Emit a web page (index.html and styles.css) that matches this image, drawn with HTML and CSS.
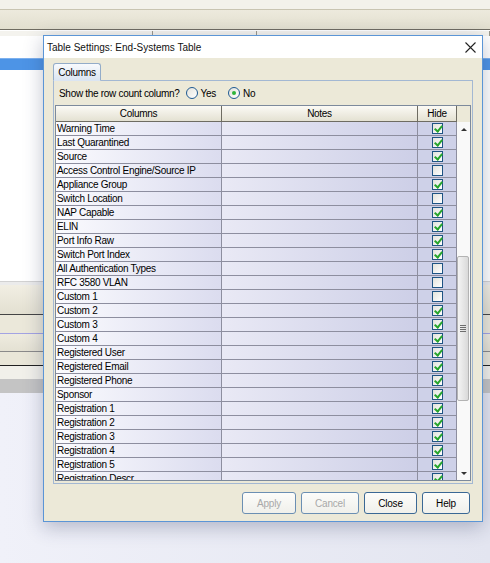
FILE: index.html
```html
<!DOCTYPE html>
<html lang="en">
<head>
  <meta charset="UTF-8" />
  <title>Table Settings: End-Systems Table</title>
  <link rel="stylesheet" href="styles.css">
</head>
<body>
  <!-- Application window behind the dialog -->
  <div class="app">
    <div class="app-top"></div>
    <div class="app-toolbar"></div>
    <div class="app-head">
      <span class="head-cell w1"></span>
      <span class="head-cell w2"></span>
      <span class="head-cell"></span>
    </div>
    <div class="app-grid">
      <div class="sel-row"></div>
    </div>
    <div class="band band-a"></div>
    <div class="band band-b"></div>
    <div class="band band-c"></div>
    <div class="band band-d"></div>
    <div class="band band-e"></div>
    <div class="band band-f"></div>
    <div class="band band-g"></div>
    <div class="desk"></div>
  </div>

  <!-- Table Settings dialog -->
  <div class="dialog">
    <div class="title-bar">
      <span class="title">Table Settings: End-Systems Table</span>
      <span class="close-btn">
        <svg width="11" height="11" viewBox="0 0 11 11"><path d="M0.5 0.5 L10.5 10.5 M10.5 0.5 L0.5 10.5" stroke="#222" stroke-width="1.1" fill="none"/></svg>
      </span>
    </div>

    <div class="dialog-body">
      <div class="tab">Columns</div>
      <div class="panel">
        <div class="options">
          <span>Show the row count column?</span>
          <label class="radio"><i class="dot"></i>Yes</label>
          <label class="radio"><i class="dot on"></i>No</label>
        </div>

        <div class="table">
          <div class="thead">
            <span class="th">Columns</span>
            <span class="th">Notes</span>
            <span class="th">Hide</span>
            <span class="th corner"></span>
          </div>
          <div class="tbody">
            <div class="rows">
              <div class="row"><span class="c-name">Warning Time</span><span class="c-notes"></span><span class="c-hide"><i class="box on"></i></span></div>
              <div class="row"><span class="c-name">Last Quarantined</span><span class="c-notes"></span><span class="c-hide"><i class="box on"></i></span></div>
              <div class="row"><span class="c-name">Source</span><span class="c-notes"></span><span class="c-hide"><i class="box on"></i></span></div>
              <div class="row"><span class="c-name">Access Control Engine/Source IP</span><span class="c-notes"></span><span class="c-hide"><i class="box"></i></span></div>
              <div class="row"><span class="c-name">Appliance Group</span><span class="c-notes"></span><span class="c-hide"><i class="box on"></i></span></div>
              <div class="row"><span class="c-name">Switch Location</span><span class="c-notes"></span><span class="c-hide"><i class="box"></i></span></div>
              <div class="row"><span class="c-name">NAP Capable</span><span class="c-notes"></span><span class="c-hide"><i class="box on"></i></span></div>
              <div class="row"><span class="c-name">ELIN</span><span class="c-notes"></span><span class="c-hide"><i class="box on"></i></span></div>
              <div class="row"><span class="c-name">Port Info Raw</span><span class="c-notes"></span><span class="c-hide"><i class="box on"></i></span></div>
              <div class="row"><span class="c-name">Switch Port Index</span><span class="c-notes"></span><span class="c-hide"><i class="box on"></i></span></div>
              <div class="row"><span class="c-name">All Authentication Types</span><span class="c-notes"></span><span class="c-hide"><i class="box"></i></span></div>
              <div class="row"><span class="c-name">RFC 3580 VLAN</span><span class="c-notes"></span><span class="c-hide"><i class="box"></i></span></div>
              <div class="row"><span class="c-name">Custom 1</span><span class="c-notes"></span><span class="c-hide"><i class="box"></i></span></div>
              <div class="row"><span class="c-name">Custom 2</span><span class="c-notes"></span><span class="c-hide"><i class="box on"></i></span></div>
              <div class="row"><span class="c-name">Custom 3</span><span class="c-notes"></span><span class="c-hide"><i class="box on"></i></span></div>
              <div class="row"><span class="c-name">Custom 4</span><span class="c-notes"></span><span class="c-hide"><i class="box on"></i></span></div>
              <div class="row"><span class="c-name">Registered User</span><span class="c-notes"></span><span class="c-hide"><i class="box on"></i></span></div>
              <div class="row"><span class="c-name">Registered Email</span><span class="c-notes"></span><span class="c-hide"><i class="box on"></i></span></div>
              <div class="row"><span class="c-name">Registered Phone</span><span class="c-notes"></span><span class="c-hide"><i class="box on"></i></span></div>
              <div class="row"><span class="c-name">Sponsor</span><span class="c-notes"></span><span class="c-hide"><i class="box on"></i></span></div>
              <div class="row"><span class="c-name">Registration 1</span><span class="c-notes"></span><span class="c-hide"><i class="box on"></i></span></div>
              <div class="row"><span class="c-name">Registration 2</span><span class="c-notes"></span><span class="c-hide"><i class="box on"></i></span></div>
              <div class="row"><span class="c-name">Registration 3</span><span class="c-notes"></span><span class="c-hide"><i class="box on"></i></span></div>
              <div class="row"><span class="c-name">Registration 4</span><span class="c-notes"></span><span class="c-hide"><i class="box on"></i></span></div>
              <div class="row"><span class="c-name">Registration 5</span><span class="c-notes"></span><span class="c-hide"><i class="box on"></i></span></div>
              <div class="row"><span class="c-name">Registration Descr</span><span class="c-notes"></span><span class="c-hide"><i class="box on"></i></span></div>
            </div>

            <!-- Vertical scrollbar -->
            <div class="scrollbar">
              <div class="arrow"><i class="tri up"></i></div>
              <div class="track">
                <div class="thumb"><i class="grip"></i></div>
              </div>
              <div class="arrow"><i class="tri down"></i></div>
            </div>
          </div>
        </div>
      </div>

      <div class="actions">
        <button class="btn w-apply" disabled>Apply</button>
        <button class="btn w-cancel" disabled>Cancel</button>
        <button class="btn w-close">Close</button>
        <button class="btn w-help">Help</button>
      </div>
    </div>
  </div>
</body>
</html>
```

FILE: styles.css
```css
/* Base */
* {
  margin: 0;
  padding: 0;
  box-sizing: border-box;
}

body {
  position: relative;
  width: 490px;
  height: 563px;
  overflow: hidden;
  font-family: 'Liberation Sans', Arial, sans-serif;
  font-size: 10px;
  color: #000;
  background: #eceef6;
}

/* Background application */
.app {
  display: flex;
  flex-direction: column;
  height: 563px;
}

.app-top {
  height: 10px;
  background: #f3f2eb;
  border-bottom: 1px solid #c9c5b2;
}

.app-toolbar {
  height: 20px;
  background: linear-gradient(#edeadd, #e2dfcf);
  border-bottom: 1px solid #6f6c61;
}

.app-head {
  display: flex;
  height: 6px;
  background: #f4f3ee;
  border-top: 1px solid #fff;
}

.head-cell {
  flex: 1;
  border-right: 1px solid #9a988c;
}

.head-cell.w1 { flex: 0 0 153px; }
.head-cell.w2 { flex: 0 0 104px; }

.app-grid {
  height: 245px;
  padding-top: 22px;
  background: #fff;
}

.sel-row {
  height: 12px;
  background: #4d94e6;
  border-top: 1px solid #7cb0ee;
}

.band-a {
  height: 4px;
  background: #ebebeb;
  border-top: 1px solid #d2d2d2;
}

.band-b {
  height: 30px;
  background: linear-gradient(#f1eee3, #e3e0d1);
  border-bottom: 1px solid #444;
}

.band-c {
  height: 19px;
  background: #ebe8da;
  border-bottom: 1px solid #a3a3e3;
}

.band-d {
  height: 18px;
  background: linear-gradient(#eeebdf, #e4e1d3);
  border-bottom: 1px solid #8a8a8a;
}

.band-e {
  height: 14px;
  background: #e9e6d8;
  border-bottom: 1px solid #202020;
}

.band-f {
  height: 13px;
  background: #f1f0ea;
}

.band-g {
  height: 14px;
  background: #c4c4c4;
}

.desk {
  flex: 1;
  background: linear-gradient(to right, #f0f1f9, #e3e5f0);
}

/* Dialog window */
.dialog {
  position: absolute;
  left: 43px;
  top: 35px;
  width: 440px;
  height: 487px;
  display: flex;
  flex-direction: column;
  background: #ece9d8;
  border: 1px solid #5b95d6;
  box-shadow: 0 5px 18px rgba(40, 50, 90, 0.3);
}

.title-bar {
  display: flex;
  align-items: center;
  height: 22px;
  padding-left: 3px;
  background: #fff;
}

.title {
  font-size: 10px;
  color: #111;
}

.close-btn {
  display: flex;
  align-items: center;
  justify-content: center;
  width: 24px;
  height: 22px;
  margin-left: auto;
}

.dialog-body {
  flex: 1;
  display: flex;
  flex-direction: column;
  padding: 5px 9px 7px 9px;
}

/* Tab and panel */
.tab {
  position: relative;
  z-index: 1;
  align-self: flex-start;
  width: 48px;
  height: 18px;
  margin-bottom: -1px;
  line-height: 17px;
  text-align: center;
  letter-spacing: -0.3px;
  background: linear-gradient(#f8fafd, #dbe5f2);
  border: 1px solid #93acc9;
  border-bottom-color: #dbe5f2;
  border-radius: 3px 3px 0 0;
}

.panel {
  display: flex;
  flex-direction: column;
  height: 404px;
  padding: 0 1px 2px 1px;
  border: 1px solid #a3b8d3;
}

.options {
  display: flex;
  align-items: center;
  height: 24px;
  padding-left: 4px;
  letter-spacing: -0.3px;
}

.radio {
  display: flex;
  align-items: center;
  margin-left: 6px;
}

.radio + .radio {
  margin-left: 12px;
}

.dot {
  position: relative;
  width: 12px;
  height: 12px;
  margin-right: 3px;
  border: 1px solid #1f5a92;
  border-radius: 50%;
  background: linear-gradient(135deg, #e4e3dc, #fff);
}

.dot.on::after {
  content: "";
  position: absolute;
  left: 3px;
  top: 3px;
  width: 4px;
  height: 4px;
  border-radius: 50%;
  background: #2fb43a;
}

/* Table */
.table {
  flex: 1;
  display: flex;
  flex-direction: column;
  border: 1px solid #7d8a9c;
  overflow: hidden;
}

.thead {
  display: grid;
  grid-template-columns: 166px 196px 39px 1fr;
  height: 16px;
}

.th {
  line-height: 15px;
  text-align: center;
  letter-spacing: -0.3px;
  background: linear-gradient(#fbfaf5, #e4e1d2);
  border-right: 1px solid #6e6c62;
  border-bottom: 1px solid #6e6c62;
}

.th.corner {
  background: #ece9d8;
  border-right: none;
  border-bottom: none;
}

.tbody {
  flex: 1;
  display: flex;
  overflow: hidden;
}

.rows {
  width: 401px;
  overflow: hidden;
}

.row {
  display: grid;
  grid-template-columns: 166px 196px 39px;
  height: 14px;
}

.row span {
  border-right: 1px solid #8d8e9f;
  border-bottom: 1px solid #8d8e9f;
}

.c-name {
  padding-left: 1px;
  line-height: 13px;
  white-space: nowrap;
  overflow: hidden;
  letter-spacing: -0.3px;
  background: linear-gradient(to right, #fbfbfe, #dbdcef);
}

.c-notes {
  background: linear-gradient(to right, #e9e9f5, #cdcfe7);
}

.c-hide {
  display: flex;
  justify-content: center;
  padding-top: 1px;
  background: #ced1e8;
}

.box {
  position: relative;
  width: 11px;
  height: 11px;
  border: 1px solid #1f5484;
  background: linear-gradient(135deg, #e3e3dc, #fff);
}

.box.on::after {
  content: "";
  position: absolute;
  left: 3px;
  top: 0;
  width: 3px;
  height: 6px;
  border: solid #27a52d;
  border-width: 0 2px 2px 0;
  transform: rotate(40deg);
}

/* Scrollbar */
.scrollbar {
  flex: 1;
  display: flex;
  flex-direction: column;
  background: #f9f9f9;
}

.arrow {
  display: flex;
  align-items: center;
  justify-content: center;
  height: 14px;
}

.tri {
  width: 0;
  height: 0;
  border-left: 3px solid transparent;
  border-right: 3px solid transparent;
}

.tri.up { border-bottom: 3px solid #333; }
.tri.down { border-top: 3px solid #333; }

.track {
  flex: 1;
}

.thumb {
  display: flex;
  align-items: center;
  justify-content: center;
  height: 145px;
  margin: 120px 1px 0 0;
  border: 1px solid #b3b3b3;
  border-radius: 2px;
  background: linear-gradient(to right, #f4f4f4, #d9d9d9);
}

.grip {
  width: 6px;
  height: 7px;
  background: repeating-linear-gradient(#6d6d6d 0 1px, transparent 1px 2px);
}

/* Buttons */
.actions {
  display: flex;
  justify-content: flex-end;
  gap: 5px;
  margin-top: 8px;
  padding-right: 3px;
}

.btn {
  height: 22px;
  font-family: inherit;
  font-size: 10px;
  letter-spacing: -0.2px;
  color: #000;
  background: linear-gradient(#fcfcfa, #f0f0eb);
  border: 1px solid #3a6895;
  border-radius: 3px;
}

.btn:disabled {
  color: #a8a8a8;
  border-color: #6b8fb3;
}

.w-apply { width: 54px; }
.w-cancel { width: 58px; }
.w-close { width: 53px; }
.w-help { width: 48px; }
```
